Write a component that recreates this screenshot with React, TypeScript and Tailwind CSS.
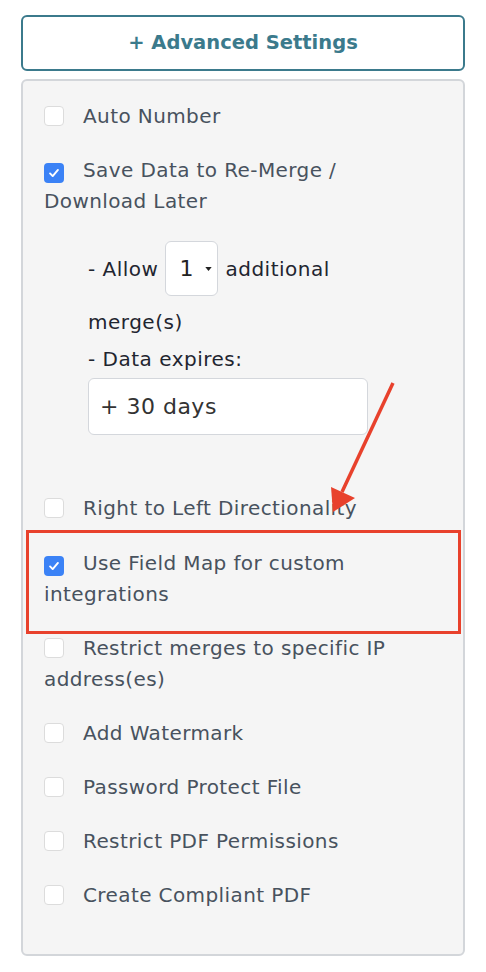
import { useState } from "react";

const font = { fontFamily: '"DejaVu Sans", "Noto Sans", sans-serif' };

const options = [
  { id: "auto-number", label: "Auto Number", checked: false },
  { id: "save-data", label: "Save Data to Re-Merge / Download Later", checked: true },
  { id: "rtl", label: "Right to Left Directionality", checked: false },
  { id: "field-map", label: "Use Field Map for custom integrations", checked: true, highlight: true },
  { id: "restrict-ip", label: "Restrict merges to specific IP address(es)", checked: false },
  { id: "watermark", label: "Add Watermark", checked: false },
  { id: "password", label: "Password Protect File", checked: false },
  { id: "pdf-perms", label: "Restrict PDF Permissions", checked: false },
  { id: "compliant", label: "Create Compliant PDF", checked: false },
];

function Checkbox({ checked }: { checked: boolean }) {
  return (
    <span
      className={`mr-[19px] inline-flex h-[20px] w-[20px] translate-y-[3px] items-center justify-center rounded-[4px] align-baseline ${
        checked ? "bg-[#3b82f6]" : "border border-[#dcdcdc] bg-white"
      }`}
    >
      {checked && (
        <svg viewBox="0 0 16 16" className="h-[14px] w-[14px]">
          <path d="M3.5 8.5l3 3 6-7" fill="none" stroke="white" strokeWidth="2.2" strokeLinecap="round" strokeLinejoin="round" />
        </svg>
      )}
    </span>
  );
}

function SaveDataExtra() {
  return (
    <div className="ml-[44px] mt-[24px] w-[280px] text-[20px] tracking-[0.5px] text-[#1f2530]">
      <div className="flex h-[55px] items-center">
        <span>- Allow</span>
        <span className="relative mx-[7px] flex h-[55px] w-[53px] shrink-0 items-center rounded-[6px] border-[1.5px] border-[#d4d7dc] bg-white pl-[13px] text-[22px] text-[#222]">
          1
          <svg viewBox="0 0 8 5" className="absolute right-[5px] top-[25px] h-[4px] w-[7px]">
            <path d="M0 0h8L4 5z" fill="#222" />
          </svg>
        </span>
        <span>additional</span>
      </div>
      <div className="mt-[11px] leading-[31px]">merge(s)</div>
      <div className="mt-[6px] leading-[31px]">- Data expires:</div>
      <div className="mt-[3px] flex h-[57px] items-center rounded-[6px] border-[1.5px] border-[#d4d7dc] bg-white pl-[11px] text-[22px] text-[#333]">
        + 30 days
      </div>
    </div>
  );
}

export default function App() {
  const [state, setState] = useState(options);

  return (
    <div className="relative h-[972px] w-[486px] bg-white" style={font}>
      <div className="px-[21px] pt-[15px]">
        <button className="flex h-[56px] w-full items-center justify-center rounded-[6px] border-2 border-[#3b7a8c] bg-white text-[19.5px] font-bold text-[#3b7a8c]">
          + Advanced Settings
        </button>

        <div className="mt-[8px] h-[877px] rounded-[6px] border-2 border-[#d3d6da] bg-[#f5f5f5] pl-[21px] pr-[21px] pt-[20px]">
          {state.map((opt, i) => (
            <div
              key={opt.id}
              className={i === 0 ? "" : opt.id === "rtl" ? "mt-[58px]" : opt.id === "field-map" ? "mt-[24px]" : "mt-[23px]"}
            >
              <div className="relative">
                <label
                  className="block cursor-pointer text-[20px] leading-[31px] tracking-[0.4px] text-[#48525e]"
                  onClick={() =>
                    setState((s) => s.map((o) => (o.id === opt.id ? { ...o, checked: !o.checked } : o)))
                  }
                >
                  <Checkbox checked={opt.checked} />
                  {opt.label}
                </label>
                {opt.highlight && (
                  <div className="pointer-events-none absolute -bottom-[24px] -left-[18px] -right-[19px] -top-[18px] border-[3px] border-[#e8412c]" />
                )}
              </div>
              {opt.id === "save-data" && <SaveDataExtra />}
            </div>
          ))}
        </div>
      </div>

      {/* annotation arrow */}
      <svg className="pointer-events-none absolute left-0 top-0" width="486" height="972">
        <line x1="393" y1="383" x2="342" y2="492" stroke="#e8412c" strokeWidth="3.5" />
        <polygon points="333,512 331,487 355,498" fill="#e8412c" />
      </svg>
    </div>
  );
}
